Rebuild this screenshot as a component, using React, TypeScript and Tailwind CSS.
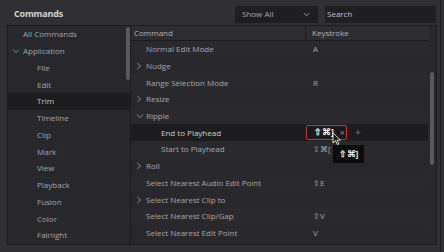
import React from "react";

const font = { fontFamily: '"Open Sans", "Noto Sans", sans-serif' };

const leftItems: { label: string; level: number; chevron?: boolean; selected?: boolean }[] = [
  { label: "All Commands", level: 0 },
  { label: "Application", level: 0, chevron: true },
  { label: "File", level: 1 },
  { label: "Edit", level: 1 },
  { label: "Trim", level: 1, selected: true },
  { label: "Timeline", level: 1 },
  { label: "Clip", level: 1 },
  { label: "Mark", level: 1 },
  { label: "View", level: 1 },
  { label: "Playback", level: 1 },
  { label: "Fusion", level: 1 },
  { label: "Color", level: 1 },
  { label: "Fairlight", level: 1 },
];

type Row = { label: string; level: number; chev?: "r" | "d"; key?: string; active?: boolean };
const rows: Row[] = [
  { label: "Normal Edit Mode", level: 0, key: "A" },
  { label: "Nudge", level: 0, chev: "r" },
  { label: "Range Selection Mode", level: 0, key: "R" },
  { label: "Resize", level: 0, chev: "r" },
  { label: "Ripple", level: 0, chev: "d" },
  { label: "End to Playhead", level: 1, active: true },
  { label: "Start to Playhead", level: 1, key: "⇧⌘[" },
  { label: "Roll", level: 0, chev: "r" },
  { label: "Select Nearest Audio Edit Point", level: 0, key: "⇧E" },
  { label: "Select Nearest Clip to", level: 0, chev: "r" },
  { label: "Select Nearest Clip/Gap", level: 0, key: "⇧V" },
  { label: "Select Nearest Edit Point", level: 0, key: "V" },
];

function ChevR() {
  return (
    <svg width="6" height="8" viewBox="0 0 6 8" className="shrink-0">
      <path d="M1.3 1 L4.6 4 L1.3 7" stroke="#8d8d90" strokeWidth="1" fill="none" />
    </svg>
  );
}
function ChevD() {
  return (
    <svg width="8" height="6" viewBox="0 0 8 6" className="shrink-0">
      <path d="M1 1.5 L4 4.6 L7 1.5" stroke="#8d8d90" strokeWidth="1" fill="none" />
    </svg>
  );
}

export default function App() {
  return (
    <div
      className="w-[444px] h-[252px] bg-[#303034] relative overflow-hidden text-[#a8a8aa]"
      style={font}
    >
      {/* title bar */}
      <div className="h-[25px] flex items-center pt-[3px] pl-[14px] pr-[8px]">
        <div className="text-[9px] font-bold text-[#d4d4d6] tracking-[-0.2px]">Commands</div>
        <div className="flex-1" />
        <div className="w-[83px] h-[17px] bg-[#1f1f22] flex items-center pl-[7px] pr-[8px] text-[8px] text-[#a9a9ab]">
          <span>Show All</span>
          <span className="flex-1" />
          <svg width="7" height="5" viewBox="0 0 7 5">
            <path d="M0.8 1 L3.5 3.8 L6.2 1" stroke="#a0a0a2" strokeWidth="0.9" fill="none" />
          </svg>
        </div>
        <div className="w-[111px] h-[17px] ml-[7px] bg-[#1f1f22] flex items-center pl-[2px] text-[8px] text-[#c4c4c6]">
          Search
        </div>
      </div>

      {/* body */}
      <div className="ml-[7px] mr-[7px] h-[220px] flex border border-[#1c1c1f] bg-[#28282c]">
        {/* left panel */}
        <div className="w-[123px] relative bg-[#28282c] border-r border-[#1c1c1f]">
          {leftItems.map((it) => (
            <div
              key={it.label}
              className={`h-[16.75px] flex items-center text-[8px] ${
                it.selected ? "bg-[#1d1d20]" : ""
              } ${it.level === 0 ? "pl-[4px]" : "pl-[29px]"}`}
            >
              {it.level === 0 && (
                <span className="w-[11px] flex items-center justify-start">
                  {it.chevron ? <ChevD /> : null}
                </span>
              )}
              <span className={it.selected ? "text-[#c4c4c6]" : "text-[#a6a6a8]"}>{it.label}</span>
            </div>
          ))}
          <div className="absolute right-[0px] top-[1px] w-[4px] h-[53px] rounded-[2px] bg-[#5a5a5e]" />
        </div>

        {/* table */}
        <div className="flex-1 relative flex flex-col">
          <div className="h-[15px] flex items-center bg-[#2d2d31] border-b border-[#1a1a1d] text-[8px] text-[#b4b4b6] mr-[7px]">
            <div className="w-[175px] pl-[3px] border-r border-[#1a1a1d] h-full flex items-center">Command</div>
            <div className="pl-[6px]">Keystroke</div>
          </div>
          <div className="mr-[8px]">
            {rows.map((r, i) => (
              <div
                key={r.label}
                className={`h-[16.7px] flex items-center text-[8px] ${
                  r.active ? "bg-[#1d1d20]" : i % 2 === 0 ? "bg-[#2a2a2e]" : "bg-[#28282c]"
                }`}
              >
                <div
                  className={`w-[175px] flex items-center ${
                    r.level === 0 ? "pl-[5px]" : "pl-[30px]"
                  } ${r.active ? "text-[#d0d0d2]" : "text-[#a8a8aa]"}`}
                >
                  {r.level === 0 && (
                    <span className="w-[10px] flex items-center">
                      {r.chev === "r" ? <ChevR /> : r.chev === "d" ? <ChevD /> : null}
                    </span>
                  )}
                  <span>{r.label}</span>
                </div>
                {r.active ? (
                  <div className="flex items-center">
                    <div className="w-[41px] h-[15px] border border-[#c0393b] rounded-[2px] bg-[#1a1a1c] flex items-center pl-[7px] text-[8.5px] font-bold text-[#f2f2f2]">
                      <span>⇧⌘]</span>
                      <span className="ml-[6px] text-[#8a8a8c] font-normal text-[9px]">×</span>
                    </div>
                    <span className="ml-[8px] text-[#8a8a8c] text-[10px]">+</span>
                  </div>
                ) : (
                  <div className="pl-[7px] text-[#a8a8aa]">{r.key}</div>
                )}
              </div>
            ))}
          </div>
          {/* table scrollbar */}
          <div className="absolute right-[2px] top-[46px] w-[4px] h-[93px] rounded-[2px] bg-[#5a5a5e]" />
          {/* tooltip */}
          <div className="absolute left-[202px] top-[119px] w-[31px] h-[18px] bg-[#0c0c0d] flex items-center justify-center text-[8.5px] font-bold text-[#ececec]">
            ⇧⌘]
          </div>
          {/* cursor */}
          <svg
            className="absolute left-[201px] top-[106px]"
            width="10"
            height="14"
            viewBox="0 0 10 14"
          >
            <path
              d="M1 1 L1 11 L3.5 8.6 L5.3 12.6 L6.8 12 L5.1 8.1 L8.4 8.1 Z"
              fill="#1a1a1a"
              stroke="#e8e8e8"
              strokeWidth="0.9"
              strokeLinejoin="round"
            />
          </svg>
        </div>
      </div>
      <div className="absolute right-[3px] top-[0px] w-[1px] h-[252px] bg-[#1e1e21]" />
    </div>
  );
}
